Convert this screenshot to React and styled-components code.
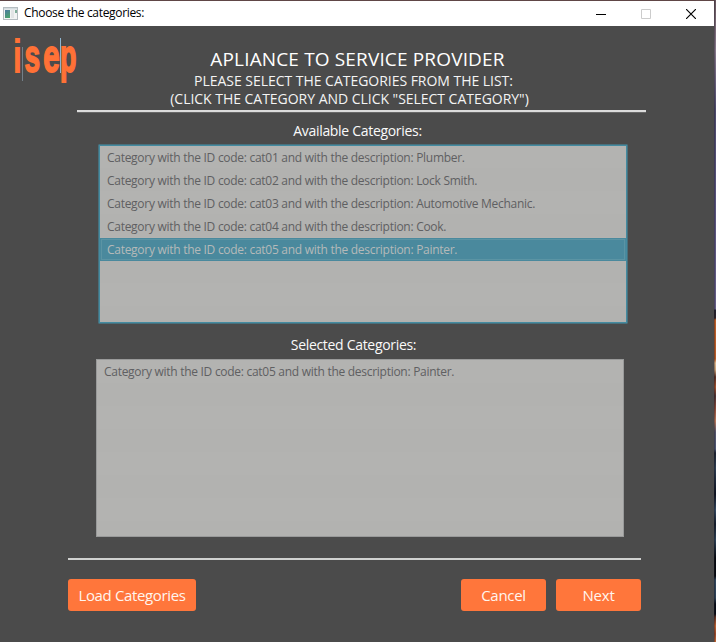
import React from "react";
import styled, { createGlobalStyle } from "styled-components";

const GlobalStyle = createGlobalStyle`
  * { box-sizing: border-box; }
  body {
    margin: 0;
    overflow: hidden;
    background: #4b4b4b;
    font-family: "Open Sans", "Noto Sans", sans-serif;
  }
`;

const Desktop = styled.div`
  display: flex;
  width: 716px;
  height: 642px;
`;

const Window = styled.main`
  display: flex;
  flex-direction: column;
  width: 714px;
  height: 642px;
  border-top: 1px solid #604646;
  background: #4b4b4b;
`;

const DesktopEdge = styled.div`
  flex: 1;
  background: linear-gradient(
    to bottom,
    #66535b 0, #86788a 50px, #4d4a6b 110px, #57527b 200px, #655e86 309px,
    #20202c 310px, #2c222b 318px, #bd6029 320px, #b75c29 359px, #dcb58b 363px,
    #c9a178 370px, #572e25 377px, #a4512d 387px, #4a3133 396px, #8a4a39 408px,
    #b8785b 421px, #56566b 432px, #4c5571 449px, #1c2230 453px, #2d3d52 468px,
    #0c1220 494px, #344a62 510px, #141c2b 524px, #2d4257 540px, #05080f 558px,
    #05080f 576px, #31465c 580px, #2c4055 598px, #060a14 604px, #060a14 614px,
    #5c3024 617px, #bd6232 626px, #97492a 634px, #c06838 642px
  );
  border-left: 1px solid rgba(30, 25, 35, 0.35);
`;

const TitleBar = styled.header`
  display: flex;
  align-items: center;
  height: 25px;
  padding: 0 1px 0 3px;
  background: #fff;
`;

const Caption = styled.span`
  flex: 1;
  padding: 0 0 1px 6px;
  color: #000;
  font-size: 12px;
  letter-spacing: -0.32px;
  line-height: 24px;
`;

const WindowButton = styled.button`
  display: grid;
  place-items: center;
  width: ${(p) => p.$width || 44}px;
  height: 25px;
  padding: 0;
  border: 0;
  background: none;
  color: ${(p) => (p.disabled ? "#ccc" : "#000")};
`;

const Content = styled.div`
  display: flex;
  flex-direction: column;
  align-items: flex-start;
`;

const Header = styled.div`
  display: grid;
  grid-template-columns: 77px 569px;
  height: 86px;
`;

const Logo = styled.svg`
  display: block;
`;

const Headings = styled.div`
  display: flex;
  flex-direction: column;
  padding-top: 21px;
  border-bottom: 2px solid #dcdcdc;
  box-shadow: 0 1px 0 #686868;
`;

const Title = styled.h1`
  margin: 0 8px 1px 0;
  color: #fff;
  font-size: 19px;
  font-weight: 400;
  letter-spacing: 0.15px;
  line-height: 24px;
  text-align: center;
  white-space: nowrap;
`;

const Hint = styled.p`
  width: ${(p) => p.$width}px;
  margin: 0;
  color: #f4f4f4;
  font-size: 14px;
  letter-spacing: -0.03px;
  line-height: 18px;
  text-align: center;
  white-space: nowrap;
`;

const Section = styled.section`
  display: flex;
  flex-direction: column;
  width: ${(p) => p.$width}px;
  margin: ${(p) => p.$margin};
`;

const Label = styled.h2`
  margin: 0 ${(p) => p.$shift}px ${(p) => p.$gap}px 0;
  color: #fafafa;
  font-size: 14px;
  font-weight: 400;
  letter-spacing: -0.31px;
  line-height: 18px;
  text-align: center;
`;

const List = styled.ul`
  height: ${(p) => (p.$focused ? 180 : 178)}px;
  margin: 0;
  padding: ${(p) => (p.$focused ? 1 : 0)}px;
  list-style: none;
  border: 1px solid ${(p) => (p.$focused ? "#47707d" : "#999a9a")};
  border-radius: ${(p) => (p.$focused ? 1 : 0)}px;
  box-shadow: ${(p) => (p.$focused ? "inset 0 0 0 1px #448ba0" : "none")};
  background: repeating-linear-gradient(#b3b3b1 0 23px, #b2b2b0 23px 46px);
`;

const Item = styled.li`
  height: 23px;
  padding-left: 7px;
  font-size: 12px;
  letter-spacing: -0.28px;
  line-height: 23px;
  white-space: nowrap;
  color: ${(p) => (p.$selected ? "#b5b9b9" : "#5f6062")};
  background: ${(p) => (p.$selected ? "#4a899d" : "transparent")};
  outline: ${(p) => (p.$selected ? "1px solid #5b94a4" : "none")};
  outline-offset: -2px;
`;

const Footer = styled.footer`
  display: flex;
  gap: 10px;
  width: 573px;
  margin: 21px 0 0 68px;
  padding-top: 19px;
  border-top: 2px solid #d0d1d0;
`;

const ActionButton = styled.button`
  width: ${(p) => p.$width || 85}px;
  height: 32px;
  margin-right: ${(p) => (p.$leading ? "auto" : 0)};
  padding: 0;
  border: 0;
  border-radius: 3px;
  background: #ff763b;
  color: #fff5ee;
  font-family: inherit;
  font-size: 15px;
  letter-spacing: ${(p) => p.$tracking || 0}px;
  line-height: 30px;
  white-space: nowrap;
`;

const LogoText = styled.text`
  font-family: "Liberation Sans", Arial, sans-serif;
  font-size: ${(p) => p.$size || 46}px;
  font-weight: 700;
  fill: #ff7136;
  stroke: #ff7136;
  stroke-width: ${(p) => p.$weight ?? 1.8};
`;

const available = [
  ["cat01", "Plumber"],
  ["cat02", "Lock Smith"],
  ["cat03", "Automotive Mechanic"],
  ["cat04", "Cook"],
  ["cat05", "Painter"],
];

const describe = ([id, name]) =>
  `Category with the ID code: ${id} and with the description: ${name}.`;

function IsepLogo() {
  return (
    <Logo width="77" height="64" viewBox="0 26 77 64">
      <LogoText $size={48} $weight={0} transform="translate(12.6 73) scale(.73 1)">i</LogoText>
      <LogoText transform="translate(24.6 72.2) scale(.61 1)">s</LogoText>
      <LogoText transform="translate(43.3 72.2) scale(.64 1)">e</LogoText>
      <LogoText transform="translate(60 72.2) scale(.585 1)">p</LogoText>
      <path d="M22.5 47V81" stroke="#738089" />
      <path d="M60.5 38V73" stroke="#8db5d1" />
    </Logo>
  );
}

export default function App() {
  return (
    <Desktop>
      <GlobalStyle />
      <Window>
        <TitleBar>
          <svg width="15" height="13" viewBox="0 0 15 13">
            <rect x=".5" y=".5" width="14" height="12" fill="#f2f4f4" stroke="#b5bdc1" />
            <rect x="1" y="1" width="13" height="1.5" fill="#d5dcdf" />
            <defs>
              <linearGradient id="pane" x2="0.4" y2="1">
                <stop stopColor="#4c79a0" />
                <stop offset="1" stopColor="#4ba071" />
              </linearGradient>
            </defs>
            <rect x="2" y="3" width="5" height="8" fill="url(#pane)" />
            <rect x="8" y="3" width="3" height="8" fill="#e2e5e6" />
            <rect x="12" y="3" width="2" height="3" fill="#7fae9a" />
          </svg>
          <Caption>Choose the categories:</Caption>
          <WindowButton aria-label="Minimize" $width={44}>
            <svg width="10" height="10"><path d="M0 5.5H10" stroke="currentColor" /></svg>
          </WindowButton>
          <WindowButton aria-label="Maximize" disabled $width={46}>
            <svg width="10" height="10"><path d="M.5 .5H9.5V9.5H.5Z" fill="none" stroke="currentColor" /></svg>
          </WindowButton>
          <WindowButton aria-label="Close">
            <svg width="10" height="10"><path d="M0 0L10 10M10 0L0 10" stroke="currentColor" strokeWidth="1.15" /></svg>
          </WindowButton>
        </TitleBar>
        <Content>
          <Header>
            <IsepLogo />
            <Headings>
              <Title>APLIANCE TO SERVICE PROVIDER</Title>
              <Hint $width={553}>PLEASE SELECT THE CATEGORIES FROM THE LIST:</Hint>
              <Hint $width={545}>(CLICK THE CATEGORY AND CLICK "SELECT CATEGORY")</Hint>
            </Headings>
          </Header>
          <Section $width={530} $margin="10px 0 0 98px">
            <Label $shift={11} $gap={4}>Available Categories:</Label>
            <List $focused>
              {available.map((c) => (
                <Item key={c[0]} $selected={c[0] === "cat05"}>{describe(c)}</Item>
              ))}
            </List>
          </Section>
          <Section $width={528} $margin="12px 0 0 96px">
            <Label $shift={13} $gap={5}>Selected Categories:</Label>
            <List>
              <Item>{describe(available[4])}</Item>
            </List>
          </Section>
          <Footer>
            <ActionButton $width={128} $tracking={-0.36} $leading>Load Categories</ActionButton>
            <ActionButton $tracking={-0.3}>Cancel</ActionButton>
            <ActionButton $tracking={-0.2}>Next</ActionButton>
          </Footer>
        </Content>
      </Window>
      <DesktopEdge />
    </Desktop>
  );
}
